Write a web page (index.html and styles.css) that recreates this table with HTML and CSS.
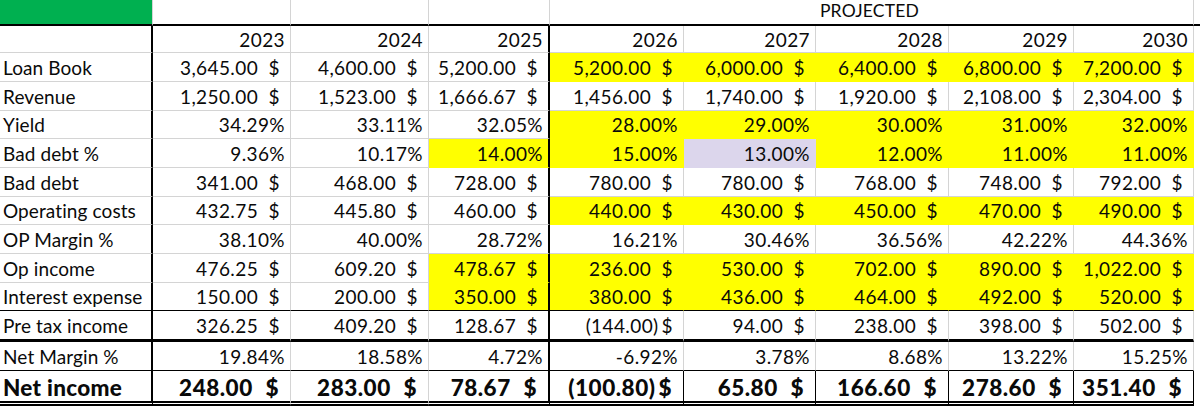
FILE: index.html
```html
<!DOCTYPE html>
<html lang="en">
<head>
<meta charset="utf-8">
<title>Loan book projection</title>
<link rel="stylesheet" href="styles.css">
</head>
<body>
<div class="sheet">
  <div class="row top">
    <div class="c green"></div><div class="c"></div><div class="c"></div><div class="c"></div>
    <div class="c proj">PROJECTED</div><div class="c f"></div>
  </div>
  <div class="row years">
    <div class="c lbl"></div>
    <div class="c pct">2023</div><div class="c pct">2024</div><div class="c pct">2025</div><div class="c pct">2026</div>
    <div class="c pct">2027</div><div class="c pct">2028</div><div class="c pct">2029</div><div class="c pct">2030</div><div class="c f"></div>
  </div>
  <div class="row">
    <div class="c lbl">Loan Book</div>
    <div class="c m"><span>3,645.00</span><i>)</i><b>$</b></div>
    <div class="c m"><span>4,600.00</span><i>)</i><b>$</b></div>
    <div class="c m"><span>5,200.00</span><i>)</i><b>$</b></div>
    <div class="c m y"><span>5,200.00</span><i>)</i><b>$</b></div>
    <div class="c m y"><span>6,000.00</span><i>)</i><b>$</b></div>
    <div class="c m y"><span>6,400.00</span><i>)</i><b>$</b></div>
    <div class="c m y"><span>6,800.00</span><i>)</i><b>$</b></div>
    <div class="c m y"><span>7,200.00</span><i>)</i><b>$</b></div>
    <div class="c f"></div>
  </div>
  <div class="row">
    <div class="c lbl">Revenue</div>
    <div class="c m"><span>1,250.00</span><i>)</i><b>$</b></div>
    <div class="c m"><span>1,523.00</span><i>)</i><b>$</b></div>
    <div class="c m"><span>1,666.67</span><i>)</i><b>$</b></div>
    <div class="c m"><span>1,456.00</span><i>)</i><b>$</b></div>
    <div class="c m"><span>1,740.00</span><i>)</i><b>$</b></div>
    <div class="c m"><span>1,920.00</span><i>)</i><b>$</b></div>
    <div class="c m"><span>2,108.00</span><i>)</i><b>$</b></div>
    <div class="c m"><span>2,304.00</span><i>)</i><b>$</b></div>
    <div class="c f"></div>
  </div>
  <div class="row">
    <div class="c lbl">Yield</div>
    <div class="c pct">34.29%</div><div class="c pct">33.11%</div><div class="c pct">32.05%</div>
    <div class="c pct y">28.00%</div><div class="c pct y">29.00%</div><div class="c pct y">30.00%</div>
    <div class="c pct y">31.00%</div><div class="c pct y">32.00%</div><div class="c f"></div>
  </div>
  <div class="row">
    <div class="c lbl">Bad debt %</div>
    <div class="c pct">9.36%</div><div class="c pct">10.17%</div><div class="c pct y">14.00%</div>
    <div class="c pct y">15.00%</div><div class="c pct lav">13.00%</div><div class="c pct y">12.00%</div>
    <div class="c pct y">11.00%</div><div class="c pct y">11.00%</div><div class="c f"></div>
  </div>
  <div class="row">
    <div class="c lbl">Bad debt</div>
    <div class="c m"><span>341.00</span><i>)</i><b>$</b></div>
    <div class="c m"><span>468.00</span><i>)</i><b>$</b></div>
    <div class="c m"><span>728.00</span><i>)</i><b>$</b></div>
    <div class="c m"><span>780.00</span><i>)</i><b>$</b></div>
    <div class="c m"><span>780.00</span><i>)</i><b>$</b></div>
    <div class="c m"><span>768.00</span><i>)</i><b>$</b></div>
    <div class="c m"><span>748.00</span><i>)</i><b>$</b></div>
    <div class="c m"><span>792.00</span><i>)</i><b>$</b></div>
    <div class="c f"></div>
  </div>
  <div class="row">
    <div class="c lbl">Operating costs</div>
    <div class="c m"><span>432.75</span><i>)</i><b>$</b></div>
    <div class="c m"><span>445.80</span><i>)</i><b>$</b></div>
    <div class="c m"><span>460.00</span><i>)</i><b>$</b></div>
    <div class="c m y"><span>440.00</span><i>)</i><b>$</b></div>
    <div class="c m y"><span>430.00</span><i>)</i><b>$</b></div>
    <div class="c m y"><span>450.00</span><i>)</i><b>$</b></div>
    <div class="c m y"><span>470.00</span><i>)</i><b>$</b></div>
    <div class="c m y"><span>490.00</span><i>)</i><b>$</b></div>
    <div class="c f"></div>
  </div>
  <div class="row">
    <div class="c lbl">OP Margin %</div>
    <div class="c pct">38.10%</div><div class="c pct">40.00%</div><div class="c pct">28.72%</div>
    <div class="c pct">16.21%</div><div class="c pct">30.46%</div><div class="c pct">36.56%</div>
    <div class="c pct">42.22%</div><div class="c pct">44.36%</div><div class="c f"></div>
  </div>
  <div class="row">
    <div class="c lbl">Op income</div>
    <div class="c m"><span>476.25</span><i>)</i><b>$</b></div>
    <div class="c m"><span>609.20</span><i>)</i><b>$</b></div>
    <div class="c m y"><span>478.67</span><i>)</i><b>$</b></div>
    <div class="c m y"><span>236.00</span><i>)</i><b>$</b></div>
    <div class="c m y"><span>530.00</span><i>)</i><b>$</b></div>
    <div class="c m y"><span>702.00</span><i>)</i><b>$</b></div>
    <div class="c m y"><span>890.00</span><i>)</i><b>$</b></div>
    <div class="c m y"><span>1,022.00</span><i>)</i><b>$</b></div>
    <div class="c f"></div>
  </div>
  <div class="row int">
    <div class="c lbl">Interest expense</div>
    <div class="c m"><span>150.00</span><i>)</i><b>$</b></div>
    <div class="c m"><span>200.00</span><i>)</i><b>$</b></div>
    <div class="c m y"><span>350.00</span><i>)</i><b>$</b></div>
    <div class="c m y"><span>380.00</span><i>)</i><b>$</b></div>
    <div class="c m y"><span>436.00</span><i>)</i><b>$</b></div>
    <div class="c m y"><span>464.00</span><i>)</i><b>$</b></div>
    <div class="c m y"><span>492.00</span><i>)</i><b>$</b></div>
    <div class="c m y"><span>520.00</span><i>)</i><b>$</b></div>
    <div class="c f"></div>
  </div>
  <div class="row pretax">
    <div class="c lbl">Pre tax income</div>
    <div class="c m"><span>326.25</span><i>)</i><b>$</b></div>
    <div class="c m"><span>409.20</span><i>)</i><b>$</b></div>
    <div class="c m"><span>128.67</span><i>)</i><b>$</b></div>
    <div class="c m"><span>(144.00</span><i class="neg">)</i><b>$</b></div>
    <div class="c m"><span>94.00</span><i>)</i><b>$</b></div>
    <div class="c m"><span>238.00</span><i>)</i><b>$</b></div>
    <div class="c m"><span>398.00</span><i>)</i><b>$</b></div>
    <div class="c m"><span>502.00</span><i>)</i><b>$</b></div>
    <div class="c f"></div>
  </div>
  <div class="row nm">
    <div class="c lbl">Net Margin %</div>
    <div class="c pct">19.84%</div><div class="c pct">18.58%</div><div class="c pct">4.72%</div>
    <div class="c pct">-6.92%</div><div class="c pct">3.78%</div><div class="c pct">8.68%</div>
    <div class="c pct">13.22%</div><div class="c pct">15.25%</div><div class="c f"></div>
  </div>
  <div class="row ni">
    <div class="c lbl">Net income</div>
    <div class="c m"><span>248.00</span><i>)</i><b>$</b></div>
    <div class="c m"><span>283.00</span><i>)</i><b>$</b></div>
    <div class="c m"><span>78.67</span><i>)</i><b>$</b></div>
    <div class="c m bx"><span>(100.80</span><i class="neg">)</i><b>$</b></div>
    <div class="c m bx"><span>65.80</span><i>)</i><b>$</b></div>
    <div class="c m bx"><span>166.60</span><i>)</i><b>$</b></div>
    <div class="c m bx"><span>278.60</span><i>)</i><b>$</b></div>
    <div class="c m bx"><span>351.40</span><i>)</i><b>$</b></div>
    <div class="c f"></div>
  </div>
</div>
</body>
</html>
```

FILE: styles.css
```css
html, body {
  margin: 0;
  padding: 0;
  background: #fff;
}

body {
  width: 1200px;
  height: 408px;
  overflow: hidden;
  font-family: Lato, "Liberation Sans", sans-serif;
  font-size: 19px;
  color: #0a0a0a;
}

.sheet {
  display: grid;
  grid-template-columns: 153px 138px 138px 121px 134px 132px 133px 125px 120px 6px;
  grid-template-rows: 26px 27px 29px 29px 28px 29px 29px 28px 29px 29px 28px 31px 29px 35px;
}

.row {
  display: contents;
}

.c {
  box-sizing: border-box;
  border-right: 1px solid #d4d4d4;
  border-bottom: 1px solid #d4d4d4;
  display: flex;
  align-items: center;
  justify-content: flex-end;
  padding-top: 2px;
  line-height: 1.2;
  white-space: nowrap;
  min-width: 0;
  letter-spacing: 0.4px;
}

.c:first-child {
  border-right: 2px solid #000;
}

.c:nth-child(4) {
  border-right: 2px solid #000;
}

.lbl {
  justify-content: flex-start;
  padding-left: 3px;
  letter-spacing: 0.1px;
}

.pct {
  padding-right: 5px;
}

.m {
  padding-right: 10px;
}

.m i {
  font-style: normal;
  visibility: hidden;
  margin-right: 5px;
}

.m i.neg {
  visibility: visible;
  margin-right: 3px;
}

.m b {
  font-weight: inherit;
}

.y {
  background: #ffff00;
  border-color: #ffff00;
}

.lav {
  background: #dcd6ec;
  border-color: #dcd6ec;
}

.f {
  border-right: none;
  border-bottom: none;
}

/* top row */
.top .c {
  border-bottom: 2px solid #000;
}

.top .c:first-child,
.top .c:nth-child(4) {
  border-right: 1px solid #d4d4d4;
}

.top .green {
  background: #00b050;
  border-right: none;
}

.top .proj {
  grid-column: span 5;
  justify-content: center;
  padding-top: 0;
  padding-right: 4px;
  align-items: flex-start;
  font-size: 17.5px;
  line-height: 1.25;
  letter-spacing: 0.2px;
}

/* section lines */
.int .c:not(.f) {
  border-bottom: 1px solid #000;
}

.pretax .c:not(.f) {
  border-bottom: 3px solid #000;
}

.nm .c:not(.f) {
  border-bottom: 1px solid #000;
}

.ni .c {
  font-weight: 900;
  font-size: 22.5px;
  letter-spacing: 0.5px;
}

.ni .lbl {
  letter-spacing: 0.3px;
}

.ni .m {
  padding-right: 11px;
}

.ni .m i {
  margin-right: 6px;
}

.ni .m i.neg {
  margin-right: 3px;
}

.ni .c:not(.f) {
  border-bottom: 5px double #000;
}

.ni .bx {
  border-right: 1px solid #000;
}
```
